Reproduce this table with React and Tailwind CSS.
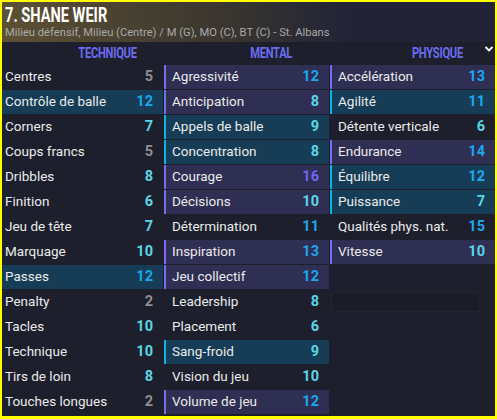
import React from "react";

const tech = [
  ["Centres", 5, ""],
  ["Contrôle de balle", 12, "t"],
  ["Corners", 7, ""],
  ["Coups francs", 5, ""],
  ["Dribbles", 8, ""],
  ["Finition", 6, ""],
  ["Jeu de tête", 7, ""],
  ["Marquage", 10, ""],
  ["Passes", 12, "t"],
  ["Penalty", 2, ""],
  ["Tacles", 10, ""],
  ["Technique", 10, ""],
  ["Tirs de loin", 8, ""],
  ["Touches longues", 2, ""],
];

const mental = [
  ["Agressivité", 12, "p"],
  ["Anticipation", 8, "p"],
  ["Appels de balle", 9, "t"],
  ["Concentration", 8, "t"],
  ["Courage", 16, "p"],
  ["Décisions", 10, "p"],
  ["Détermination", 11, ""],
  ["Inspiration", 13, "p"],
  ["Jeu collectif", 12, "p"],
  ["Leadership", 8, ""],
  ["Placement", 6, ""],
  ["Sang-froid", 9, "t"],
  ["Vision du jeu", 10, ""],
  ["Volume de jeu", 12, "p"],
];

const phys = [
  ["Accélération", 13, "p"],
  ["Agilité", 11, "t"],
  ["Détente verticale", 6, ""],
  ["Endurance", 14, "p"],
  ["Équilibre", 12, "t"],
  ["Puissance", 7, "t"],
  ["Qualités phys. nat.", 15, ""],
  ["Vitesse", 10, "p"],
];

function valColor(v) {
  if (v <= 5) return "text-[#8e8f96]";
  if (v <= 10) return "text-[#5ad6e6]";
  if (v <= 15) return "text-[#1ca8ee]";
  return "text-[#6f66f2]";
}

function Row({ label, value, kind, stripe }) {
  let bg = "bg-[#1d1f2c]";
  let border = "border-l-2 border-transparent";
  if (kind === "p") {
    bg = "bg-[#2f2e53]";
    border = "border-l-2 border-[#7a6cf0]";
  } else if (kind === "t") {
    bg = "bg-[#163d55]";
    border = "border-l-2 border-[#0cb2e8]";
  }
  return (
    <div
      className={`h-[24px] flex items-center justify-between ${bg} ${
        stripe ? border + " pl-[6px]" : "pl-[3px]"
      } pr-[10px]`}
    >
      <span className="text-[13.5px] text-[#ebebeb] leading-none">{label}</span>
      <span className={`text-[14.5px] font-bold leading-none ${valColor(value)}`}>
        {value}
      </span>
    </div>
  );
}

function Col({ items, stripe, extra }) {
  return (
    <div className="flex flex-col gap-[1px]">
      {items.map(([l, v, k]) => (
        <Row key={l} label={l} value={v} kind={k} stripe={stripe} />
      ))}
      {extra}
    </div>
  );
}

function Header({ children }) {
  return (
    <div className="flex justify-center pl-[50px]">
      <span className="inline-block scale-x-[0.72] text-[15.5px] font-bold text-[#6b6cf0] tracking-tight leading-none">
        {children}
      </span>
    </div>
  );
}

export default function App() {
  return (
    <div
      className="w-[497px] h-[419px] bg-[#ffff00] p-[2px] pb-[3px]"
      style={{ fontFamily: "Roboto, 'Noto Sans', sans-serif" }}
    >
      <div className="relative w-full h-full bg-[#1d1f2c] overflow-hidden">
        <div className="h-[40px] bg-linear-to-r from-[#5d5134] via-[#3a362f] via-45% to-[#222336] to-70% pl-[3px] pt-[5px]">
          <div className="h-[17px] flex items-center">
            <span className="inline-block origin-left scale-x-[0.73] text-[20px] font-bold text-white leading-[17px] whitespace-nowrap">
              7. SHANE WEIR
            </span>
          </div>
          <div className="text-[11.2px] text-[#a9a9a9] leading-[17px] whitespace-nowrap">
            Milieu défensif, Milieu (Centre) / M (G), MO (C), BT (C) - St. Albans
          </div>
        </div>
        <svg
          className="absolute right-[1px] top-[43px]"
          width="10"
          height="8"
          viewBox="0 0 10 8"
        >
          <polyline
            points="1.5,2 5,5.5 8.5,2"
            fill="none"
            stroke="#ffffff"
            strokeWidth="1.8"
          />
        </svg>
        <div className="grid grid-cols-[161px_165px_1fr] gap-x-[1px] h-[23px] items-center">
          <Header>TECHNIQUE</Header>
          <Header>MENTAL</Header>
          <Header>PHYSIQUE</Header>
        </div>
        <div className="grid grid-cols-[161px_165px_1fr] gap-x-[1px]">
          <Col items={tech} stripe={false} />
          <Col items={mental} stripe={true} />
          <Col
            items={phys}
            stripe={true}
            extra={
              <>
                <div className="h-[24px]" />
                <div className="h-[24px] flex items-center pl-[1px]">
                  <div className="h-[20px] w-[148px] bg-[#1a1c27] border border-[#222434]" />
                </div>
              </>
            }
          />
        </div>
      </div>
    </div>
  );
}
